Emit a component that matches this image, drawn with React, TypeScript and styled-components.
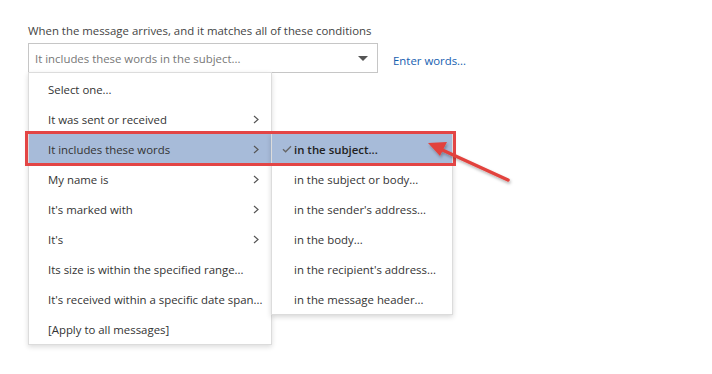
import React from 'react';
import styled, { createGlobalStyle } from 'styled-components';

const GlobalStyle = createGlobalStyle`
  html, body {
    margin: 0;
    padding: 0;
    background: #ffffff;
  }
  body {
    font-family: "Open Sans", "Noto Sans", "Liberation Sans", sans-serif;
    color: #333333;
  }
`;

const mainItems = [
  { label: 'Select one...', arrow: false },
  { label: 'It was sent or received', arrow: true },
  { label: 'It includes these words', arrow: true, active: true },
  { label: 'My name is', arrow: true },
  { label: "It's marked with", arrow: true },
  { label: "It's", arrow: true },
  { label: 'Its size is within the specified range...', arrow: false },
  { label: "It's received within a specific date span...", arrow: false },
  { label: '[Apply to all messages]', arrow: false },
];

const subItems = [
  'in the subject...',
  'in the subject or body...',
  "in the sender's address...",
  'in the body...',
  "in the recipient's address...",
  'in the message header...',
];

const Chevron = () => (
  <svg width="6" height="9" viewBox="0 0 6 9">
    <path d="M1 1 L5 4.5 L1 8" fill="none" stroke="#555" strokeWidth="1.2" />
  </svg>
);

const Check = () => (
  <svg width="10" height="8" viewBox="0 0 10 8">
    <path d="M1 4.2 L3.6 6.8 L9 1.2" fill="none" stroke="#666" strokeWidth="1.3" />
  </svg>
);

const App: React.FC = () => {
  return (
    <>
      <GlobalStyle />
      <Page>
        <Label>When the message arrives, and it matches all of these conditions</Label>
        <SelectRow>
          <SelectBox>
            <SelectText>It includes these words in the subject...</SelectText>
            <Caret />
          </SelectBox>
          <EnterLink>Enter words...</EnterLink>
        </SelectRow>
        <Menus>
          <Menu>
            {mainItems.map((item) => (
              <MenuItem key={item.label} active={!!item.active}>
                <span>{item.label}</span>
                {item.arrow && <Chevron />}
              </MenuItem>
            ))}
          </Menu>
          <SubMenu>
            {subItems.map((label, i) => (
              <SubItem key={label} active={i === 0}>
                <CheckSlot>{i === 0 && <Check />}</CheckSlot>
                {label}
              </SubItem>
            ))}
          </SubMenu>
          <Callout />
          <ArrowMark width="100" height="60" viewBox="0 0 100 60">
            <defs>
              <filter id="sh" x="-20%" y="-20%" width="140%" height="160%">
                <feDropShadow dx="1" dy="2" stdDeviation="1.5" floodColor="#000" floodOpacity="0.3" />
              </filter>
            </defs>
            <g filter="url(#sh)">
              <line x1="86" y1="46" x2="16" y2="14" stroke="#e2433e" strokeWidth="3.5" strokeLinecap="round" />
              <polygon points="6,9 25,8 18,22" fill="#e2433e" />
            </g>
          </ArrowMark>
        </Menus>
      </Page>
    </>
  );
};

const Page = styled.div`
  padding: 24px 0 0 28px;
  width: 684px;
  height: 350px;
  font-size: 11.4px;
`;

const Label = styled.div`
  line-height: 14px;
  color: #444;
  margin-bottom: 5px;
`;

const SelectRow = styled.div`
  display: flex;
  align-items: center;
  gap: 15px;
`;

const SelectBox = styled.div`
  box-sizing: border-box;
  width: 350px;
  height: 30px;
  border: 1px solid #c6c6c6;
  display: flex;
  align-items: center;
  justify-content: space-between;
  padding: 0 9px 0 6px;
  background: #fff;
`;

const SelectText = styled.span`
  color: #777;
`;

const Caret = styled.span`
  width: 0;
  height: 0;
  border-left: 5px solid transparent;
  border-right: 5px solid transparent;
  border-top: 5px solid #555;
`;

const EnterLink = styled.a`
  color: #1660b0;
  cursor: pointer;
  margin-top: 4px;
`;

const Menus = styled.div`
  position: relative;
  display: flex;
  align-items: flex-start;
  margin-top: -1px;
`;

const Menu = styled.div`
  box-sizing: border-box;
  width: 244px;
  padding: 1px 0 0;
  background: #fff;
  border: 1px solid #dcdcdc;
  box-shadow: 0 2px 5px rgba(0, 0, 0, 0.14);
`;

const MenuItem = styled.div<{ active: boolean }>`
  height: 30px;
  display: flex;
  align-items: center;
  justify-content: space-between;
  padding: 0 12px 0 19px;
  white-space: nowrap;
  color: #333;
  background: ${({ active }) => (active ? '#a7bbd9' : 'transparent')};
`;

const SubMenu = styled.div`
  box-sizing: border-box;
  width: 182px;
  margin-top: 61px;
  margin-left: -1px;
  background: #fff;
  border: 1px solid #dcdcdc;
  box-shadow: 0 2px 5px rgba(0, 0, 0, 0.16);
`;

const SubItem = styled.div<{ active: boolean }>`
  height: 30px;
  display: flex;
  align-items: center;
  padding-left: 10px;
  white-space: nowrap;
  color: ${({ active }) => (active ? '#222' : '#333')};
  font-weight: ${({ active }) => (active ? 600 : 400)};
  background: ${({ active }) => (active ? '#a7bbd9' : 'transparent')};
`;

const CheckSlot = styled.span`
  width: 12px;
  display: inline-flex;
  align-items: center;
`;

const Callout = styled.div`
  position: absolute;
  left: -3px;
  top: 59px;
  width: 431px;
  height: 35px;
  box-sizing: border-box;
  border: 3px solid #e34545;
  pointer-events: none;
`;

const ArrowMark = styled.svg`
  position: absolute;
  left: 394px;
  top: 62px;
  overflow: visible;
`;

export default App;
